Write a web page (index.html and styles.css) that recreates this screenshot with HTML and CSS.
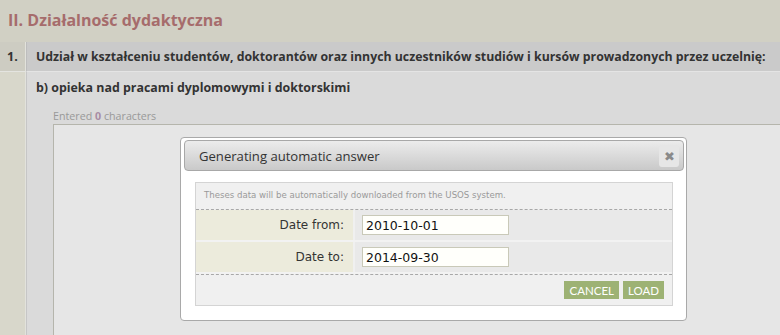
FILE: index.html
```html
<!DOCTYPE html>
<html lang="pl">
<head>
  <meta charset="UTF-8">
  <title>Działalność dydaktyczna</title>
  <link rel="stylesheet" href="styles.css">
</head>
<body>
  <h1 class="page-title">II. Działalność dydaktyczna</h1>

  <div class="section">
    <div class="num">1.</div>
    <div class="head">Udział w kształceniu studentów, doktorantów oraz innych uczestników studiów i kursów prowadzonych przez uczelnię:</div>
    <div class="num-side"></div>
    <div class="body">
      <h2 class="sub">b) opieka nad pracami dyplomowymi i doktorskimi</h2>
      <div class="counter">Entered <b>0</b> characters</div>
      <div class="editor"></div>
    </div>
  </div>

  <!-- modal -->
  <div class="dialog">
    <div class="dialog-head">
      <span>Generating automatic answer</span>
      <span class="close">&#x2716;</span>
    </div>
    <div class="panel">
      <div class="info">Theses data will be automatically downloaded from the USOS system.</div>
      <div class="row">
        <label class="lbl">Date from:</label>
        <div class="val"><input type="text" value="2010-10-01"></div>
      </div>
      <div class="row">
        <label class="lbl">Date to:</label>
        <div class="val"><input type="text" value="2014-09-30"></div>
      </div>
      <div class="foot">
        <button>Cancel</button>
        <button>Load</button>
      </div>
    </div>
  </div>
</body>
</html>
```

FILE: styles.css
```css
body {
  margin: 0;
  height: 335px;
  background-color: #d1d0c4;
  font-family: Tahoma, "DejaVu Sans", sans-serif;
  overflow: hidden;
}
.page-title {
  margin: 0;
  height: 42px;
  box-sizing: border-box;
  padding: 9px 8px 0;
  font-family: "Open Sans", sans-serif;
  font-size: 16px;
  font-weight: 700;
  color: #a66c6c;
}
.section {
  height: 293px;
  display: grid;
  grid-template-columns: 26px 1fr;
  grid-template-rows: 30px 1fr;
  overflow: hidden;
}
.num {
  background-color: #cdccc2;
  border-right: 1px solid #e2e2dc;
  border-bottom: 1px solid #e4e4e0;
  font-family: "Open Sans", sans-serif;
  font-weight: 700;
  font-size: 12.5px;
  color: #333;
  padding: 6px 0 0 7px;
}
.head {
  background-color: #cacaca;
  border-left: 1px solid #bdbdbd;
  border-bottom: 1px solid #e4e4e4;
  font-family: "Open Sans", sans-serif;
  font-weight: 700;
  font-size: 12.3px;
  color: #333;
  padding: 6px 0 0 9px;
  white-space: nowrap;
}
.num-side {
  background-color: #d8d7cb;
  border-right: 1px solid #e2e2dc;
}
.body {
  background-color: #dadada;
  border-left: 1px solid #c6c6c6;
  padding: 7px 0 0 9px;
}
.sub {
  margin: 0;
  font-family: "Open Sans", sans-serif;
  font-weight: 700;
  font-size: 12.4px;
  color: #333;
}
.counter {
  margin: 13px 0 0 17px;
  font-family: "Open Sans", sans-serif;
  font-size: 10.7px;
  line-height: 14px;
  color: #999;
}
.counter b {
  color: #a88ca4;
}
.editor {
  margin: 1px 0 0 17px;
  height: 220px;
  background-color: #e6e6e6;
  border: 1px solid #b5b5ac;
  border-right: none;
}

.dialog {
  position: absolute;
  left: 180px;
  top: 137px;
  width: 505px;
  height: 182px;
  background-color: #fff;
  border: 1px solid #a9a9a9;
  border-radius: 4px;
}
.dialog-head {
  margin: 2px 2px 0 3px;
  height: 29px;
  border: 1px solid #a8a8a8;
  border-radius: 4px;
  background: linear-gradient(#ececec, #c9c9c9);
  display: flex;
  align-items: center;
  justify-content: space-between;
  padding: 0 4px 0 14px;
  font-family: "Open Sans", sans-serif;
  font-size: 13.1px;
  color: #333;
}
.close {
  width: 20px;
  height: 22px;
  border-radius: 3px;
  background-color: #e6e6e6;
  color: #8a8a8a;
  font-size: 13px;
  display: flex;
  align-items: center;
  justify-content: center;
}
.panel {
  margin: 11px 13px 0 14px;
  border: 1px solid #d4d4d4;
  background-color: #f0f0f0;
}
.info {
  height: 27px;
  box-sizing: border-box;
  padding: 7px 0 0 8px;
  border-bottom: 1px dashed #a8a8a8;
  font-family: "DejaVu Sans", sans-serif;
  font-size: 8.6px;
  color: #9a9a9a;
}
.row {
  display: grid;
  grid-template-columns: 157px 1fr;
  gap: 2px;
  border-bottom: 2px solid #f2f2f2;
}
.row:first-of-type {
  border-top: 1px solid #f2f2f2;
}
.lbl {
  height: 30px;
  background-color: #ecebdc;
  display: flex;
  align-items: center;
  justify-content: flex-end;
  padding-right: 9px;
  font-family: "DejaVu Sans", sans-serif;
  font-size: 12px;
  color: #333;
}
.val {
  background-color: #e9e9e9;
  display: flex;
  align-items: center;
  padding-left: 7px;
}
.val input {
  width: 147px;
  height: 20px;
  box-sizing: border-box;
  border: 1px solid #c9c9b8;
  background-color: #fffffb;
  padding: 0 3px;
  font-family: "DejaVu Sans", sans-serif;
  font-size: 12.5px;
  color: #111;
}
.foot {
  border-top: 1px dashed #a8a8a8;
  height: 30px;
  display: flex;
  justify-content: flex-end;
  align-items: center;
  gap: 4px;
  padding-right: 8px;
}
.foot button {
  height: 18px;
  border: none;
  background-color: #9db274;
  color: #fff;
  font-family: Lato, sans-serif;
  font-size: 11.5px;
  text-transform: uppercase;
  padding: 0 5px;
}
```
